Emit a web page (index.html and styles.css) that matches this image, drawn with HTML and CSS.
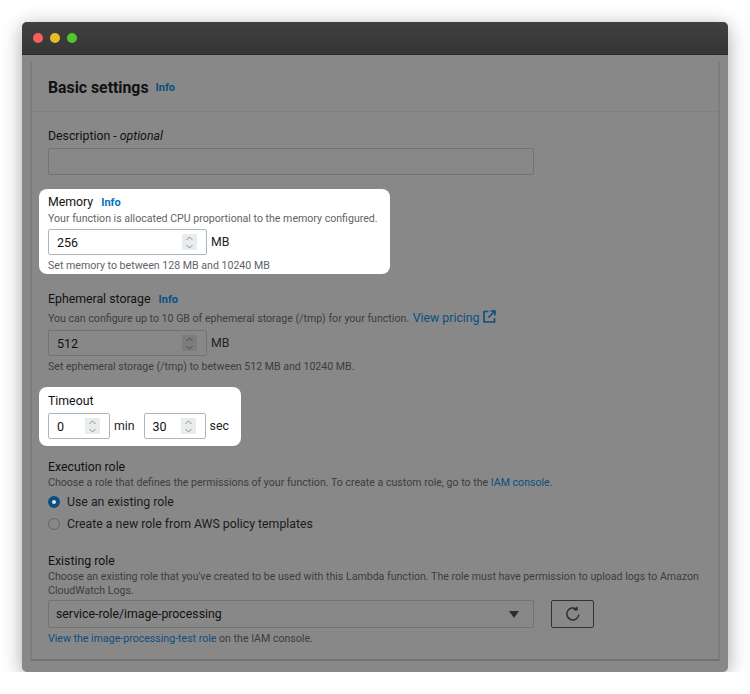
FILE: index.html
```html
<!DOCTYPE html>
<html lang="en">
<head>
    <meta charset="UTF-8">
    <meta name="viewport" content="width=device-width, initial-scale=1.0">
    <title>Basic settings</title>
    <link rel="stylesheet" href="styles.css">
</head>
<body>
    <div class="window">
        <div class="titlebar">
            <span class="dot dot-red"></span>
            <span class="dot dot-yellow"></span>
            <span class="dot dot-green"></span>
        </div>

        <div class="panel">
            <div class="panel-header">
                <h2>Basic settings</h2>
                <a class="info" href="#">Info</a>
            </div>

            <div class="panel-body">
                <div class="field field-description">
                    <div class="label">Description - <i>optional</i></div>
                    <div class="text-input"></div>
                </div>

                <div class="field highlight field-memory">
                    <div class="label">Memory <a class="info" href="#">Info</a></div>
                    <div class="desc">Your function is allocated CPU proportional to the memory configured.</div>
                    <div class="input-row">
                        <div class="num-input num-wide">
                            <span>256</span>
                            <span class="spinner">
                                <svg width="9" height="15" viewBox="0 0 9 15"><path d="M1.5 5 4.5 2l3 3M1.5 10l3 3 3-3"/></svg>
                            </span>
                        </div>
                        <span class="unit">MB</span>
                    </div>
                    <div class="hint">Set memory to between 128 MB and 10240 MB</div>
                </div>

                <div class="field field-storage">
                    <div class="label">Ephemeral storage <a class="info" href="#">Info</a></div>
                    <div class="desc">You can configure up to 10 GB of ephemeral storage (/tmp) for your function. <a class="pricing" href="#">View pricing <svg width="13" height="13" viewBox="0 0 13 13"><path d="M5.5 1.5H1v10.500h10.500V8M7.500 1h4.500v4.500M12 1 5.500 7.500"/></svg></a></div>
                    <div class="input-row">
                        <div class="num-input num-wide">
                            <span>512</span>
                            <span class="spinner">
                                <svg width="9" height="15" viewBox="0 0 9 15"><path d="M1.5 5 4.5 2l3 3M1.5 10l3 3 3-3"/></svg>
                            </span>
                        </div>
                        <span class="unit">MB</span>
                    </div>
                    <div class="hint">Set ephemeral storage (/tmp) to between 512 MB and 10240 MB.</div>
                </div>

                <div class="field highlight field-timeout">
                    <div class="label">Timeout</div>
                    <div class="input-row">
                        <div class="num-input num-small">
                            <span>0</span>
                            <span class="spinner">
                                <svg width="9" height="15" viewBox="0 0 9 15"><path d="M1.5 5 4.5 2l3 3M1.5 10l3 3 3-3"/></svg>
                            </span>
                        </div>
                        <span class="unit">min</span>
                        <div class="num-input num-small">
                            <span>30</span>
                            <span class="spinner">
                                <svg width="9" height="15" viewBox="0 0 9 15"><path d="M1.5 5 4.5 2l3 3M1.5 10l3 3 3-3"/></svg>
                            </span>
                        </div>
                        <span class="unit">sec</span>
                    </div>
                </div>

                <div class="field field-execution">
                    <div class="label">Execution role</div>
                    <div class="desc">Choose a role that defines the permissions of your function. To create a custom role, go to the <a class="link" href="#">IAM console</a>.</div>
                    <div class="radio-row radio-first"><span class="radio radio-on"></span>Use an existing role</div>
                    <div class="radio-row"><span class="radio"></span>Create a new role from AWS policy templates</div>
                </div>

                <div class="field field-role">
                    <div class="label">Existing role</div>
                    <div class="desc">Choose an existing role that you've created to be used with this Lambda function. The role must have permission to upload logs to Amazon CloudWatch Logs.</div>
                    <div class="select-row">
                        <div class="select">
                            <span>service-role/image-processing</span>
                            <span class="caret"></span>
                        </div>
                        <div class="refresh">
                            <svg width="16" height="16" viewBox="0 0 16 16"><path d="M13.800 8.500A6 6 0 1 1 11.500 3.200M12 .8v3h-3.200"/></svg>
                        </div>
                    </div>
                    <div class="hint hint-role"><a class="link" href="#">View the image-processing-test role</a> on the IAM console.</div>
                </div>
            </div>
        </div>
    </div>
</body>
</html>
```

FILE: styles.css
```css
body {
    margin: 0;
    background-color: #fff;
    font-family: Roboto, "Noto Sans", sans-serif;
    color: #111;
}

a {
    text-decoration: none;
}

.window {
    width: 706px;
    height: 650px;
    margin: 22px 0 0 22px;
    background-color: #888;
    border-radius: 5px;
    box-shadow: 0 4px 20px rgba(0, 0, 0, 0.35);
    overflow: hidden;
}

.titlebar {
    height: 33px;
    box-sizing: border-box;
    padding: 11px 11px 0;
    display: flex;
    gap: 7px;
    background: linear-gradient(#404040, #353535);
    border-bottom: 1px solid #2a2a2a;
}

.dot {
    width: 10px;
    height: 10px;
    border-radius: 50%;
}

.dot-red {
    background-color: #f95f58;
}

.dot-yellow {
    background-color: #e6bb28;
}

.dot-green {
    background-color: #55c52c;
}

.panel {
    width: 690px;
    height: 600px;
    box-sizing: border-box;
    margin: 6px 0 0 8px;
    border-style: solid;
    border-width: 1px 2px 2px 2px;
    border-color: #858585 #7d7d7d #6f7371 #7d7d7d;
}

.panel-header {
    height: 50px;
    box-sizing: border-box;
    padding: 2px 0 0 16px;
    display: flex;
    align-items: center;
    gap: 7px;
    border-bottom: 1px solid #7f7f7f;
}

.panel-header h2 {
    margin: 0;
    font-size: 15.800px;
    line-height: 20px;
    font-weight: 700;
    color: #111;
}

.panel-body {
    padding: 0 16px;
}

.info {
    font-size: 11px;
    font-weight: 700;
    color: #0b4f80;
}

.label {
    font-size: 12.300px;
    line-height: 16px;
}

.label .info {
    margin-left: 5px;
}

.desc,
.hint {
    font-size: 10.600px;
    line-height: 14px;
    color: #3d3d3d;
}

.field-description {
    padding-top: 16px;
}

.text-input {
    width: 484px;
    height: 25px;
    margin-top: 4px;
    border: 1px solid #6e7672;
    border-radius: 2px;
}

.highlight {
    margin: 0 0 0 -9px;
    padding-left: 9px;
    padding-right: 9px;
    background-color: #fff;
    border-radius: 8px;
}

.highlight .info {
    color: #0073bb;
}

.highlight .desc,
.highlight .hint {
    color: #5f6368;
}

.field-memory {
    width: 351px;
    height: 85px;
    box-sizing: border-box;
    margin-top: 14px;
    padding-top: 5px;
}

.field-memory .desc {
    margin-top: 1px;
}

.field-memory .input-row {
    margin-top: 3px;
}

.field-memory .hint {
    margin-top: 4px;
}

.field-storage {
    padding-top: 17px;
}

.field-storage .desc {
    margin-top: 2px;
}

.field-storage .hint {
    margin-top: 4px;
}

.field-timeout {
    width: 202px;
    height: 59px;
    box-sizing: border-box;
    margin-top: 13px;
    padding-top: 6px;
}

.input-row {
    display: flex;
    align-items: center;
    gap: 4px;
    margin-top: 4px;
}

.num-input {
    height: 26px;
    flex-shrink: 0;
    box-sizing: border-box;
    display: flex;
    align-items: center;
    justify-content: space-between;
    padding: 0 9px 0 8px;
    font-size: 12.500px;
    border: 1px solid #6e7672;
    border-radius: 2px;
}

.highlight .num-input {
    border-color: #a9b8c0;
}

.num-wide {
    width: 159px;
}

.num-small {
    width: 62px;
}

.spinner {
    width: 15px;
    height: 16px;
    display: flex;
    align-items: center;
    justify-content: center;
    background-color: #7c7c7c;
}

.highlight .spinner {
    background-color: #e9ebed;
}

.spinner svg path {
    fill: none;
    stroke: #4a4a4a;
    stroke-width: 1;
}

.highlight .spinner svg path {
    stroke: #879596;
}

.unit {
    font-size: 12.300px;
    color: #222;
}

.num-small + .unit {
    margin-right: 5px;
}

.pricing {
    margin-left: 1px;
    font-size: 12.300px;
    color: #0b4f80;
}

.pricing svg {
    vertical-align: -1px;
}

.pricing svg path {
    fill: none;
    stroke: #0b4f80;
    stroke-width: 1.6;
}

.link {
    color: #0b4f80;
}

.field-execution {
    padding-top: 13px;
}

.field-execution .desc,
.field-role .desc {
    margin-top: 1px;
}

.radio-row {
    display: flex;
    align-items: center;
    gap: 7px;
    height: 22px;
    font-size: 12.300px;
    color: #1a1a1a;
}

.radio-first {
    margin-top: 1px;
}

.radio {
    width: 12px;
    height: 12px;
    box-sizing: border-box;
    border: 1px solid #666;
    border-radius: 50%;
}

.radio-on {
    border: 4px solid #0b4f80;
    background-color: #e4e4e4;
}

.field-role {
    padding-top: 18px;
}

.select-row {
    display: flex;
    gap: 17px;
    margin-top: 2px;
}

.select {
    width: 486px;
    height: 28px;
    box-sizing: border-box;
    display: flex;
    align-items: center;
    justify-content: space-between;
    padding: 0 14px 0 7px;
    font-size: 12.300px;
    border: 1px solid #6e7672;
    border-radius: 2px;
}

.caret {
    width: 0;
    height: 0;
    border-left: 5px solid transparent;
    border-right: 5px solid transparent;
    border-top: 7px solid #2e2e2e;
}

.refresh {
    width: 43px;
    height: 28px;
    box-sizing: border-box;
    display: flex;
    align-items: center;
    justify-content: center;
    border: 1px solid #333;
    border-radius: 2px;
}

.refresh svg path {
    fill: none;
    stroke: #2e2e2e;
    stroke-width: 1.5;
}

.hint-role {
    margin-top: 4px;
}
```
